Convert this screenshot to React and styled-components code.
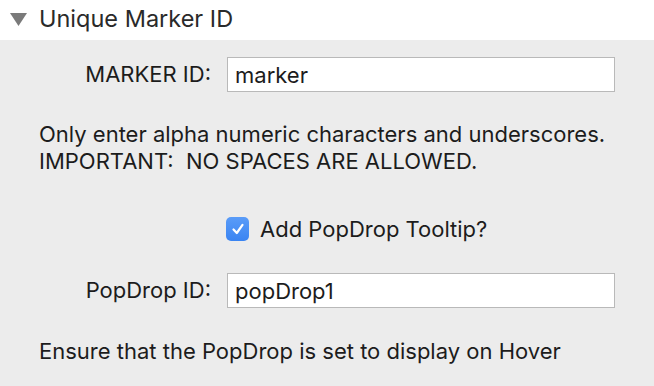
import React from "react";
import styled, { createGlobalStyle } from "styled-components";

const Global = createGlobalStyle`
  html, body { margin: 0; padding: 0; background: #ececec; }
  body { font-family: Inter, "Noto Sans", "Liberation Sans", sans-serif; color: #1f1f1f; }
  * { box-sizing: border-box; }
`;

const Page = styled.div`
  width: 654px;
  height: 386px;
  display: flex;
  flex-direction: column;
  overflow: hidden;
`;

const Header = styled.div`
  height: 40px;
  background: #ffffff;
  display: flex;
  align-items: center;
  padding-left: 10px;
  gap: 12px;
`;

const Disclosure = styled.svg`
  width: 17px;
  height: 13px;
  margin-top: -2px;
`;

const Title = styled.span`
  font-size: 23.5px;
  color: #2a2a2a;
  line-height: 40px;
  margin-top: -2px;
`;

const Panel = styled.div`
  flex: 1;
  background: #ececec;
  padding: 17px 39px 0 39px;
  display: flex;
  flex-direction: column;
`;

const FieldRow = styled.div`
  display: grid;
  grid-template-columns: 172px 388px;
  column-gap: 16px;
  align-items: center;
  margin-top: ${(p) => p.$top || 0}px;
`;

const Label = styled.label`
  font-size: 22px;
  line-height: 27px;
  text-align: right;
  color: #1c1c1c;
`;

const Input = styled.input`
  height: 35px;
  width: 100%;
  border: 1px solid #b9b9b9;
  background: #fff;
  font-family: inherit;
  font-size: 22px;
  color: #1c1c1c;
  padding: 0 0 0 7px;
  outline: none;
`;

const Text = styled.p`
  margin: ${(p) => p.$top || 0}px 0 0 0;
  font-size: 22px;
  line-height: 27px;
  color: #1c1c1c;
  white-space: nowrap;
`;

const CheckRow = styled.label`
  display: flex;
  align-items: center;
  gap: 11px;
  margin-top: 42px;
  margin-left: 187px;
  height: 24px;
  font-size: 22px;
  line-height: 27px;
  color: #1c1c1c;
`;

const Box = styled.span`
  width: 23px;
  height: 24px;
  border-radius: 5px;
  background: linear-gradient(#5a9cf8, #3a84f2);
  display: flex;
  align-items: center;
  justify-content: center;
`;

export default function App() {
  return (
    <Page>
      <Global />
      <Header>
        <Disclosure viewBox="0 0 17 13">
          <polygon points="0,0 17,0 8.5,13" fill="#7a7a7a" />
        </Disclosure>
        <Title>Unique Marker ID</Title>
      </Header>
      <Panel>
        <FieldRow>
          <Label>MARKER ID:</Label>
          <Input defaultValue="marker" />
        </FieldRow>
        <Text $top={29}>
          Only enter alpha numeric characters and underscores.
          <br />
          IMPORTANT:&nbsp; NO SPACES ARE ALLOWED.
        </Text>
        <CheckRow>
          <Box>
            <svg width="14" height="14" viewBox="0 0 14 14">
              <path d="M2.5 7.5 L5.8 11 L11.5 2.8" fill="none" stroke="#fff" strokeWidth="2.2" strokeLinecap="round" strokeLinejoin="round" />
            </svg>
          </Box>
          Add PopDrop Tooltip?
        </CheckRow>
        <FieldRow $top={32}>
          <Label>PopDrop ID:</Label>
          <Input defaultValue="popDrop1" />
        </FieldRow>
        <Text $top={30}>Ensure that the PopDrop is set to display on Hover</Text>
      </Panel>
    </Page>
  );
}
